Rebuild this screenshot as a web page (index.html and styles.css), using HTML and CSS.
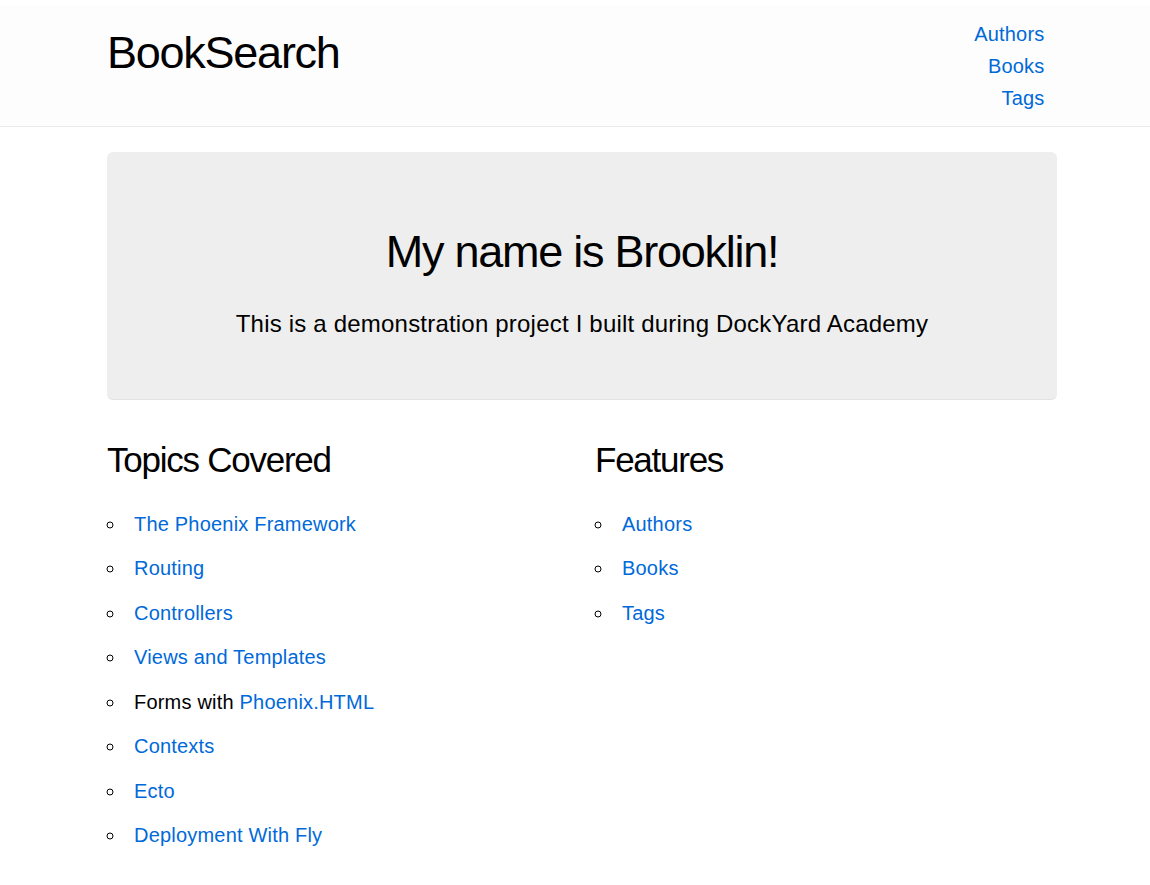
FILE: index.html
```html
<!DOCTYPE html>
<html lang="en">
<head>
<meta charset="utf-8">
<title>BookSearch</title>
<link rel="stylesheet" href="styles.css">
</head>
<body>
<header class="site-header">
  <section class="container header-row">
    <h2 class="logo">BookSearch</h2>
    <nav class="main-nav">
      <ul>
        <li><a href="#">Authors</a></li>
        <li><a href="#">Books</a></li>
        <li><a href="#">Tags</a></li>
      </ul>
    </nav>
  </section>
</header>
<main class="container">
  <section class="hero">
    <h2 class="hero-title">My name is Brooklin!</h2>
    <p class="hero-text">This is a demonstration project I built during DockYard Academy</p>
  </section>
  <section class="columns">
    <article class="column">
      <h3 class="col-title">Topics Covered</h3>
      <ul class="bullets">
        <li><a href="#">The Phoenix Framework</a></li>
        <li><a href="#">Routing</a></li>
        <li><a href="#">Controllers</a></li>
        <li><a href="#">Views and Templates</a></li>
        <li>Forms with <a href="#">Phoenix.HTML</a></li>
        <li><a href="#">Contexts</a></li>
        <li><a href="#">Ecto</a></li>
        <li><a href="#">Deployment With Fly</a></li>
      </ul>
    </article>
    <article class="column">
      <h3 class="col-title">Features</h3>
      <ul class="bullets">
        <li><a href="#">Authors</a></li>
        <li><a href="#">Books</a></li>
        <li><a href="#">Tags</a></li>
      </ul>
    </article>
  </section>
</main>
</body>
</html>
```
FILE: styles.css
```css
* { box-sizing: border-box; }
html, body { margin: 0; padding: 0; }
body {
  font-family: "Liberation Sans", Arial, Helvetica, sans-serif;
  font-size: 20px;
  line-height: 1.6;
  letter-spacing: 0.01em;
  color: #000;
  background: #fff;
  padding-left: 14px;
  padding-top: 5px;
}
a { color: #0069d9; text-decoration: none; }
h2, h3, p, ul { margin-top: 0; }
h2, h3 { letter-spacing: -1.25px; font-weight: normal; }

.container {
  max-width: 1000px;
  margin: 0 auto;
  padding: 0 25px;
}

.site-header {
  background: #fdfdfd;
  border-bottom: 1px solid #eaeaea;
  margin-bottom: 25px;
  margin-left: -14px;
  padding-left: 14px;
}
.header-row {
  display: flex;
  justify-content: space-between;
  align-items: flex-start;
}
.logo {
  font-size: 45px;
  line-height: 1.25;
  margin: 20px 0 0 0;
}
.main-nav ul {
  list-style: none;
  margin: 12.5px;
  padding: 0;
  text-align: right;
}
.main-nav li { margin: 0; white-space: nowrap; }
.main-nav a { display: block; }

.hero {
  background: #eee;
  border-bottom: 1px solid #e3e3e3;
  border-radius: 6px;
  padding: 72px 72px 24px;
  margin-bottom: 37.5px;
  text-align: center;
  font-size: 24px;
}
.hero-title {
  font-size: 45px;
  line-height: 1.25;
  margin-bottom: 25px;
}
.hero-text {
  margin-bottom: 31.25px;
}

.columns {
  display: grid;
  grid-template-columns: 1fr 1fr;
  column-gap: 26px;
}
.col-title {
  font-size: 35px;
  line-height: 1.3;
  margin-bottom: 25px;
}
.bullets {
  list-style: circle inside;
  padding: 0;
  margin-bottom: 25px;
}
.bullets li { margin-bottom: 12.5px; }
```
